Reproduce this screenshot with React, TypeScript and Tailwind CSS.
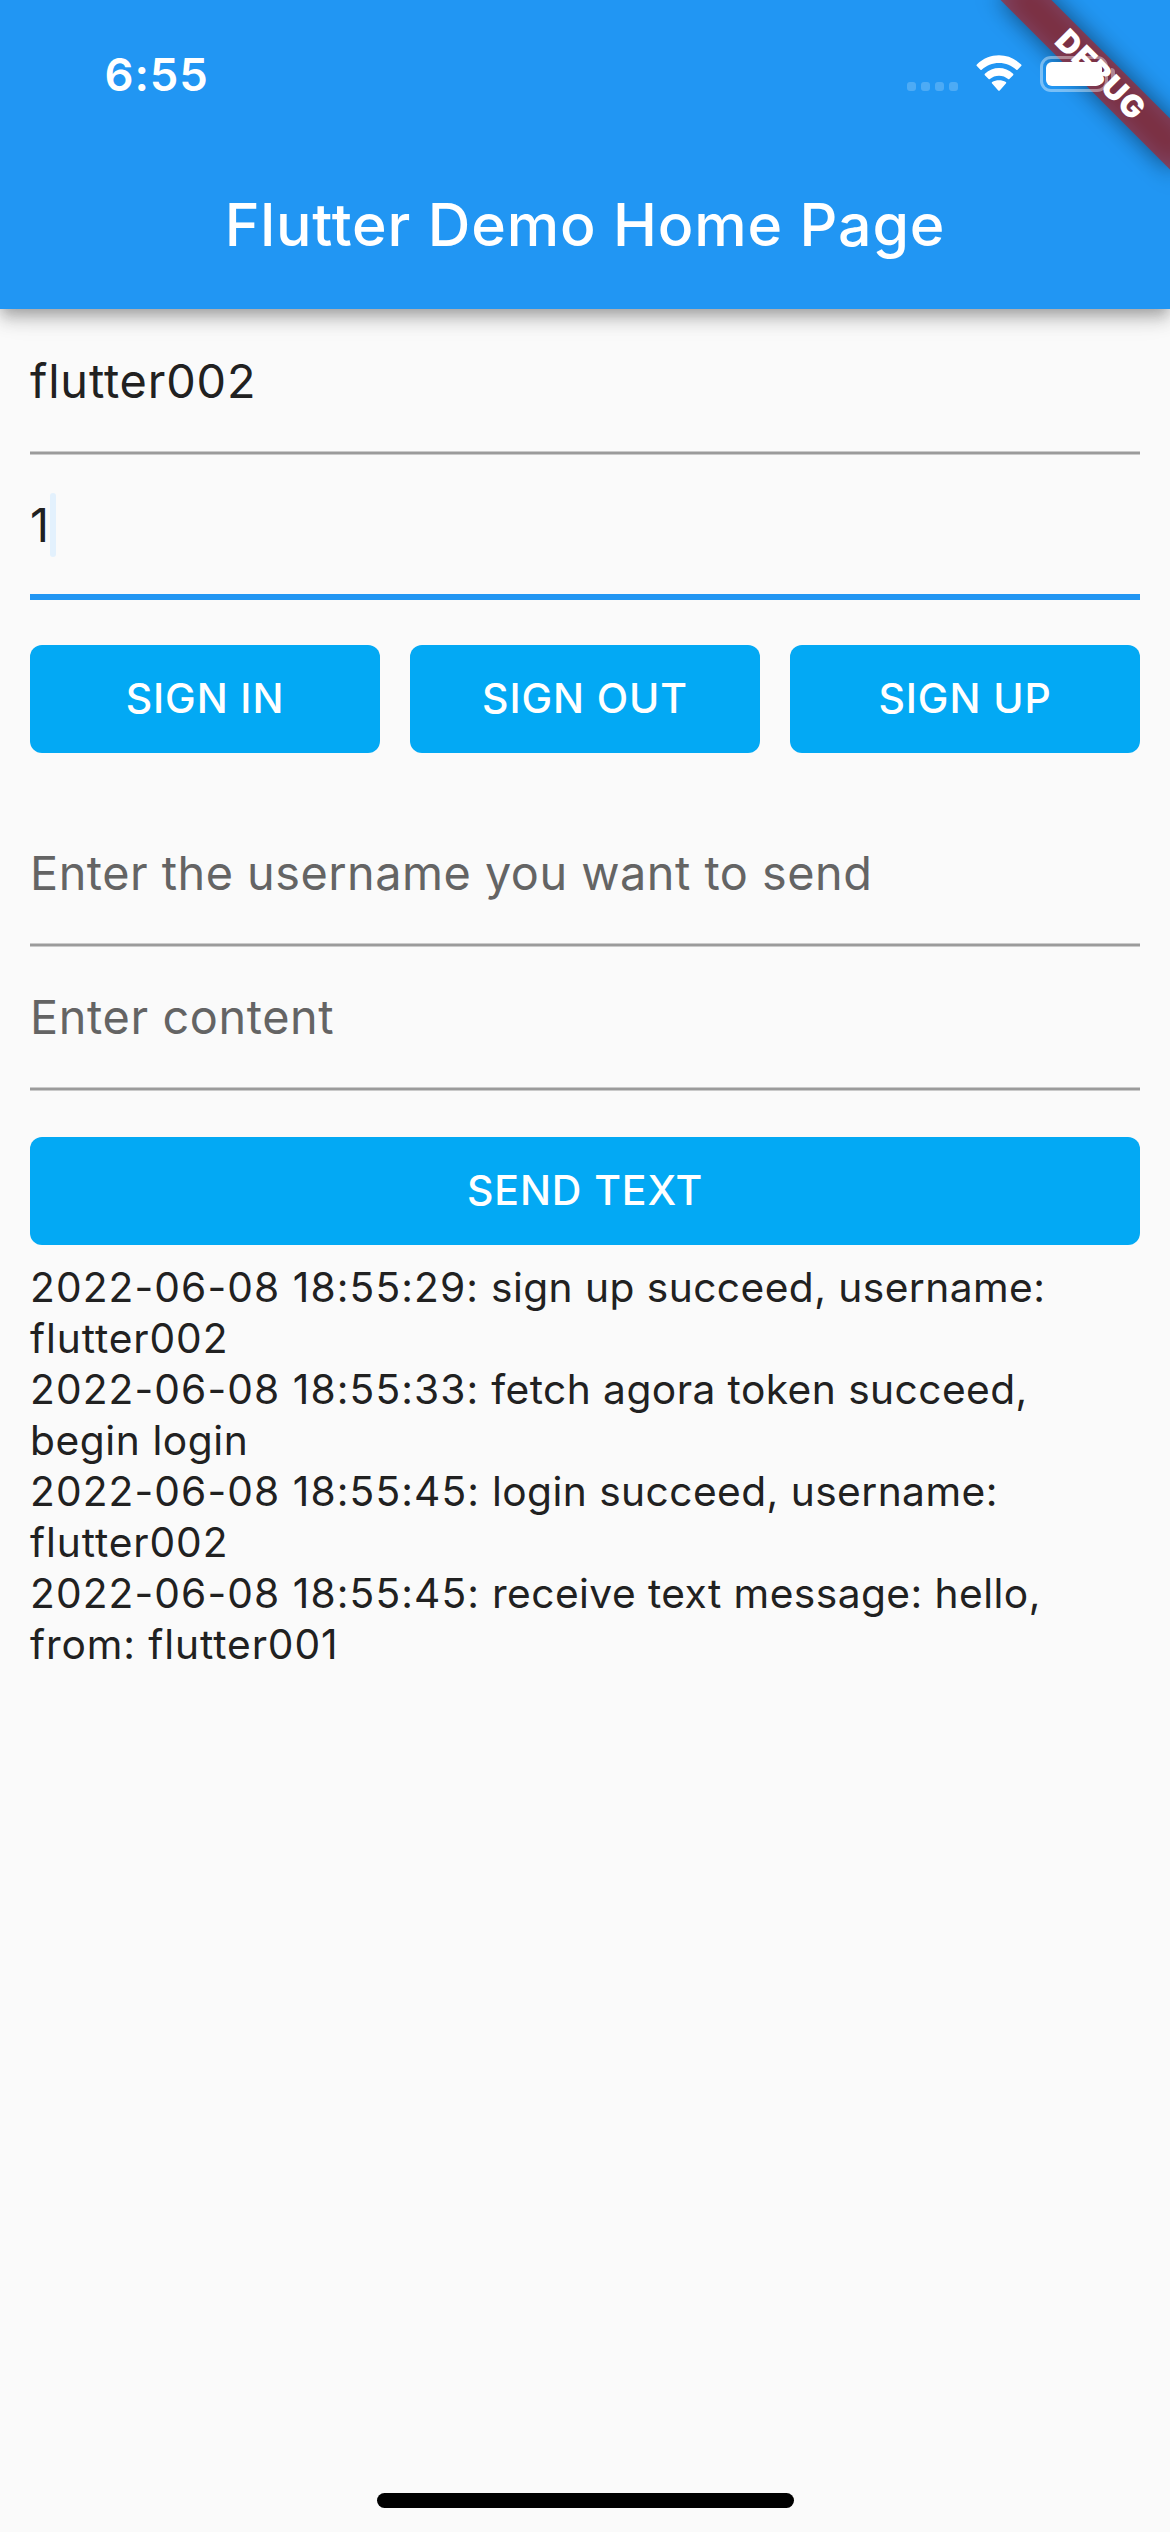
import type { ReactNode } from "react";

function WifiIcon() {
  return (
    <svg className="block h-[36px] w-[48px]" viewBox="0 0 48 36" fill="#fff">
      <path d="M24 7.9c6.7 0 12.7 2.5 17.3 6.8.35.34.9.34 1.25-.01l3.6-3.6a1.1 1.1 0 0 0 0-1.55C33.7-2.7 14.3-2.7 1.85 9.53a1.1 1.1 0 0 0 0 1.55l3.6 3.6c.35.35.9.36 1.25.01C11.3 10.4 17.3 7.9 24 7.9Z" />
      <path d="M24 20.7c3.5 0 6.6 1.2 9.1 3.4.35.33.9.32 1.24-.02l3.8-3.9c.43-.43.43-1.12 0-1.54-7.9-7.5-20.4-7.5-28.3 0-.43.42-.43 1.11 0 1.54l3.8 3.9c.34.34.89.35 1.24.02 2.5-2.2 5.6-3.4 9.12-3.4Z" />
      <path d="M30.9 28.6c.45-.43.43-1.1-.05-1.5-3.9-2.6-9.8-2.6-13.7 0-.48.4-.5 1.07-.05 1.5l6.15 6.8c.4.4 1.1.4 1.5 0l6.15-6.8Z" />
    </svg>
  );
}

function Battery() {
  return (
    <div className="flex items-center gap-[3px]">
      <div className="h-[36px] w-[68px] rounded-[11px] border-3 border-white/40 p-[3px]">
        <div className="h-full w-full rounded-[6px] bg-white" />
      </div>
      <div className="h-[12px] w-[4px] rounded-r-full bg-white/40" />
    </div>
  );
}

function StatusBar() {
  return (
    <div className="relative z-20 flex h-[141px] items-start justify-between pl-[104.5px] pr-[55px]">
      <div className="mt-[48px] text-[45.4px] leading-[53px] font-[560] tracking-[0.9px] text-white">
        6:55
      </div>
      <div className="mt-[55px] flex items-start">
        <div className="mt-[27px] flex gap-[5px]">
          {[0, 1, 2, 3].map((i) => (
            <span key={i} className="size-[9px] rounded-[3px] bg-white/20" />
          ))}
        </div>
        <div className="ml-[17px]">
          <WifiIcon />
        </div>
        <div className="mt-px ml-[17px]">
          <Battery />
        </div>
      </div>
    </div>
  );
}

function DebugBanner() {
  return (
    <div className="absolute top-0 right-0 z-10 size-[260px] overflow-hidden">
      <div className="absolute top-[53.75px] left-[68.25px] h-[36px] w-[240px] rotate-45">
        <div className="absolute inset-0 bg-black/50 blur-[12px]" />
        <div className="absolute inset-0 flex items-center justify-center bg-[#b71c1c]/63 pl-[8px] text-[31px] leading-[36px] font-black tracking-[1px] text-white">
          DEBUG
        </div>
      </div>
    </div>
  );
}

function Underline() {
  return <div className="h-[4px] border-y border-[#cacaca] bg-[#9b9b9b]" />;
}

function Button({ children }: { children: ReactNode }) {
  return (
    <button className="flex h-[108px] flex-1 items-center justify-center rounded-[12px] bg-[#03a9f4] pb-[2px] text-[41px] leading-[51px] font-medium tracking-[0.9px] text-white">
      {children}
    </button>
  );
}

const log = [
  { time: "2022-06-08 18:55:29:", lines: ["sign up succeed, username:", "flutter002"] },
  { time: "2022-06-08 18:55:33:", lines: ["fetch agora token succeed,", "begin login"] },
  { time: "2022-06-08 18:55:45:", lines: ["login succeed, username:", "flutter002"] },
  { time: "2022-06-08 18:55:45:", lines: ["receive text message: hello,", "from: flutter001"] },
];

export default function App() {
  return (
    <div className="relative flex h-[2532px] w-[1170px] flex-col overflow-hidden bg-[#fafafa] font-['Inter',sans-serif] text-[#212121]">
      <header className="h-[309px] shrink-0 bg-[#2196f3] shadow-[0_6px_12px_-3px_rgba(0,0,0,0.2),0_12px_15px_0_rgba(0,0,0,0.14),0_3px_30px_0_rgba(0,0,0,0.12)]">
        <StatusBar />
        <h1 className="text-center text-[59px] leading-[168px] font-[540] tracking-[0.85px] text-white">
          Flutter Demo Home Page
        </h1>
      </header>
      <DebugBanner />

      <main className="flex flex-1 flex-col px-[30px]">
        <div className="flex h-[142px] items-center pt-[2px] text-[46.8px] leading-[56px] tracking-[0.85px]">
          flutter002
        </div>
        <Underline />
        <div className="flex h-[139px] items-center text-[46.8px] leading-[56px]">
          <span className="w-[20px]">1</span>
          <span className="h-[64px] w-[6px] rounded-[3px] bg-[#e3f1fd]" />
        </div>
        <div className="h-[6px] bg-[#2196f3]" />

        <div className="mt-[45px] flex gap-[30px]">
          <Button>SIGN IN</Button>
          <Button>SIGN OUT</Button>
          <Button>SIGN UP</Button>
        </div>

        <div className="mt-[48px] flex h-[142px] items-center pt-[2px] text-[46.8px] leading-[56px] tracking-[0.5px] text-[#646464]">
          Enter the username you want to send
        </div>
        <Underline />
        <div className="flex h-[140px] items-center text-[46.8px] leading-[56px] tracking-[0.62px] text-[#646464]">
          Enter content
        </div>
        <Underline />

        <div className="mt-[46px] flex">
          <Button>SEND TEXT</Button>
        </div>

        <div className="mt-[17px] text-[40.7px] leading-[51px] tracking-[0.44px]">
          {log.map(({ time, lines }, i) => (
            <p key={i}>
              <span className="tracking-[1.1px]">{time}</span> {lines[0]}
              <br />
              <span className={lines[1].includes("flutter") ? "tracking-[0.9px]" : "tracking-[0.58px]"}>
                {lines[1]}
              </span>
            </p>
          ))}
        </div>
      </main>

      <div className="mb-[24px] h-[15px] w-[417px] self-center rounded-full bg-black" />
    </div>
  );
}
